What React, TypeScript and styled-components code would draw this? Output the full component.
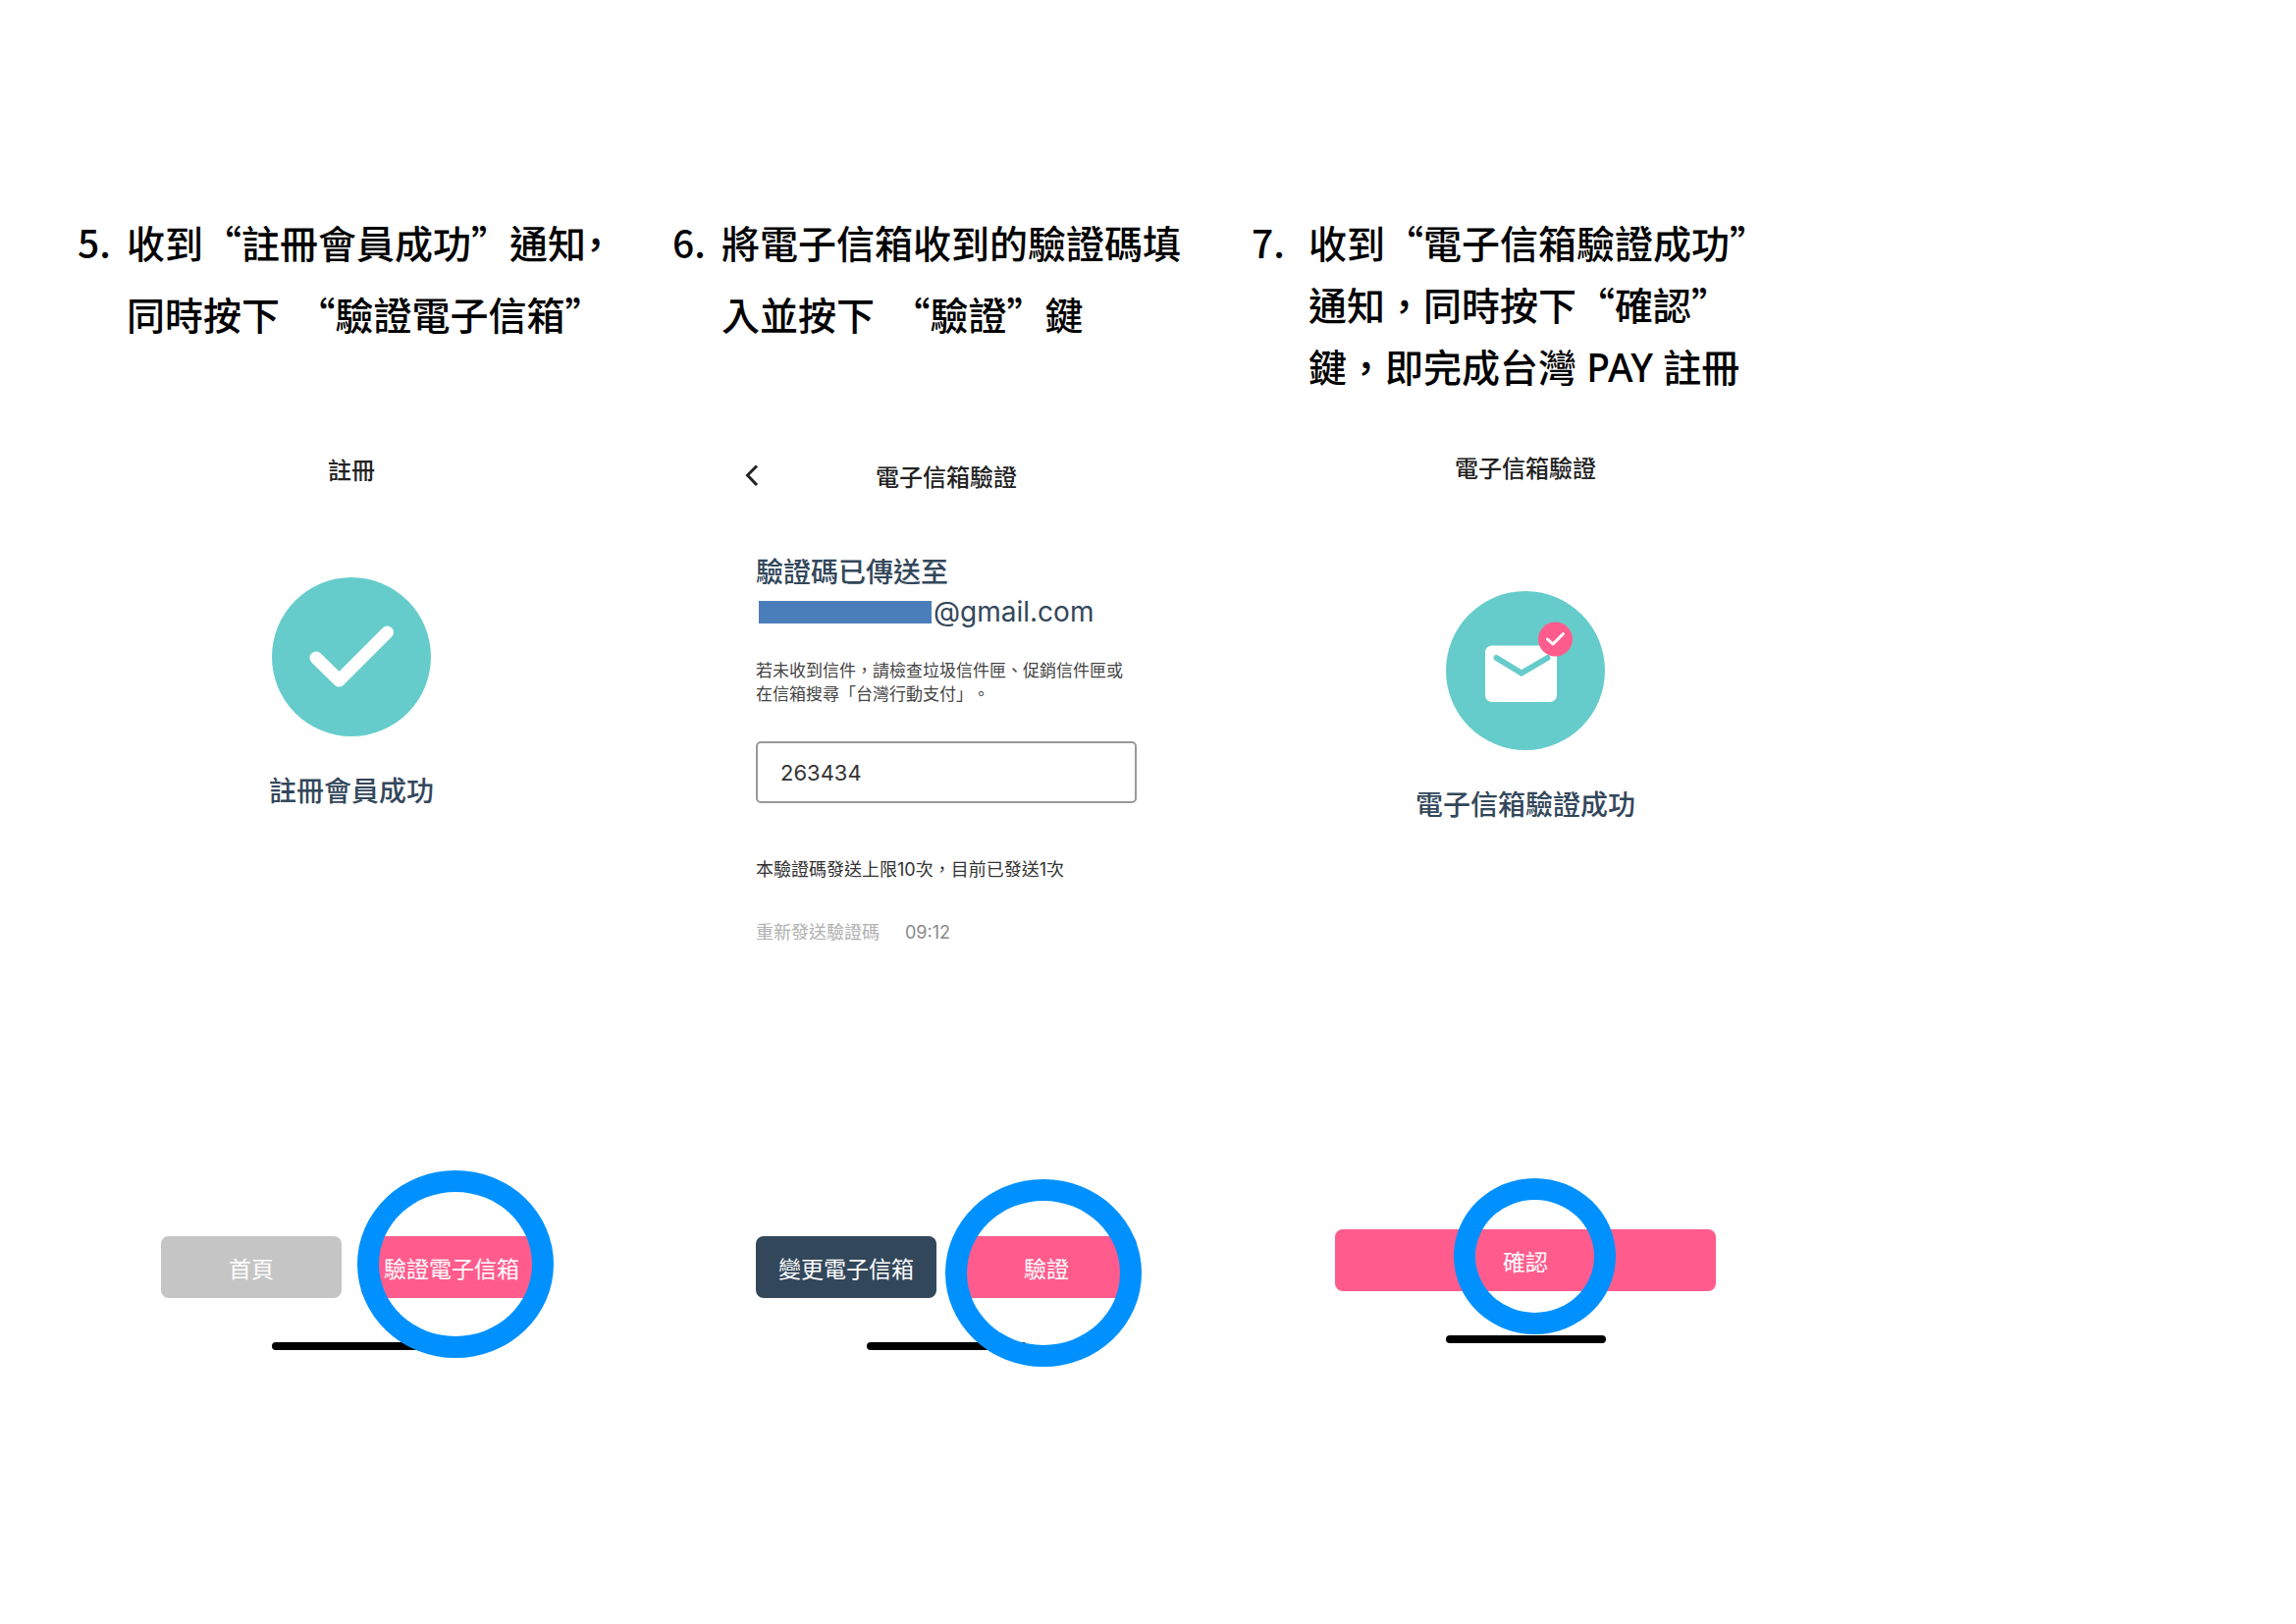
import React from "react";
import styled, { createGlobalStyle } from "styled-components";

const cjk = `"Noto Sans CJK TC", sans-serif`;
const ink = "#33475b";
const pink = "#ff5c8d";
const teal = "#66cccb";

const GlobalStyle = createGlobalStyle`
  * { box-sizing: border-box; }
  body { margin: 0; background: #fff; font-family: ${cjk}; }
`;

const Page = styled.main`
  padding: 210px 0 120px 79px;
`;

const Steps = styled.ol`
  display: grid;
  grid-template-columns: 606fr 590fr 1064fr;
  align-items: start;
  margin: 0;
  padding: 0;
  list-style: none;
`;

const Step = styled.li`
  min-width: 0;
`;

const Caption = styled.div<{ $dense?: boolean }>`
  display: grid;
  grid-template-columns: ${(p) => (p.$dense ? 58 : 50)}px 1fr;
  align-content: start;
  min-height: 242px;
  padding-top: ${(p) => (p.$dense ? 5 : 0)}px;
  color: #000;
  font-size: 39px;
  font-weight: 500;
  line-height: ${(p) => (p.$dense ? 63 : 73)}px;
  white-space: pre;
`;

const CaptionText = styled.h2`
  margin: 0;
  font: inherit;
`;

const HalfWidth = styled.span`
  font-feature-settings: "halt";
`;

const Latin = styled.span`
  font-family: "Noto Sans", sans-serif;
`;

const Screen = styled.section<{ $offset: number; $height: number }>`
  display: flex;
  flex-direction: column;
  width: 100%;
  max-width: 388px;
  min-height: ${(p) => p.$height}px;
  margin: ${(p) => p.$offset}px 0 0 85px;
`;

const TitleBar = styled.header`
  position: relative;
  display: flex;
  justify-content: center;
`;

const Title = styled.h3`
  margin: 0;
  color: #222;
  font-size: 24px;
  font-weight: 500;
  line-height: 36px;
`;

const BackButton = styled.button`
  position: absolute;
  top: 4px;
  left: -12px;
  display: flex;
  padding: 0;
  border: 0;
  background: none;
  color: #222;
`;

const Result = styled.div<{ $gap: number }>`
  display: flex;
  flex-direction: column;
  align-items: center;
  gap: 34px;
  margin-top: ${(p) => p.$gap}px;
`;

const Message = styled.p`
  margin: 0;
  color: ${ink};
  font-size: 28px;
  font-weight: 500;
  line-height: 40px;
`;

const Form = styled.form`
  display: flex;
  flex-direction: column;
  margin-top: 60px;
  font-family: Inter, ${cjk};
`;

const SentTo = styled(Message)`
  font-family: Inter, ${cjk};
`;

const Address = styled.span`
  display: flex;
  align-items: center;
  gap: 2px;
  padding-left: 3px;
  font-weight: 400;
`;

const Mask = styled.span`
  width: 176px;
  height: 23px;
  background: #4a7ebb;
`;

const Hint = styled.label`
  margin-top: 28px;
  color: #444;
  font-size: 17px;
  line-height: 24px;
  text-spacing-trim: space-all;
`;

const CodeInput = styled.input`
  width: 100%;
  height: 63px;
  margin-top: 36px;
  padding: 0 23px;
  border: 2px solid #999;
  border-radius: 5px;
  background: #fff;
  color: #333;
  font-family: Inter, ${cjk};
  font-size: 22px;
`;

const Note = styled.p`
  margin: 56px 0 0;
  color: #333;
  font-size: 18px;
  line-height: 24px;
`;

const ResendRow = styled.div`
  display: flex;
  align-items: center;
  gap: 26px;
  margin-top: 40px;
  color: #8a8a8a;
  font-size: 18px;
  line-height: 24px;
`;

const Resend = styled.button`
  padding: 0;
  border: 0;
  background: none;
  color: #b0b0b0;
  font: inherit;
`;

const Actions = styled.div`
  position: relative;
  display: flex;
  gap: 20px;
  margin-top: auto;
`;

const Button = styled.button<{ $color: string }>`
  flex: 1;
  height: 63px;
  padding: 0;
  border: 0;
  border-radius: 8px;
  background: ${(p) => p.$color};
  color: #fff;
  font-family: ${cjk};
  font-size: 23px;
  font-weight: 400;
  white-space: nowrap;
`;

const Ring = styled.span<{ $x: number; $y: number; $w: number; $h: number }>`
  position: absolute;
  left: ${(p) => p.$x}px;
  top: ${(p) => p.$y}px;
  z-index: 1;
  width: ${(p) => p.$w}px;
  height: ${(p) => p.$h}px;
  border: 22px solid #0091ff;
  border-radius: 50%;
  pointer-events: none;
`;

const HomeBar = styled.div`
  align-self: center;
  width: 163px;
  height: 8px;
  margin-top: 45px;
  border-radius: 4px;
  background: #000;
`;

function CheckBadge() {
  return (
    <svg width="162" height="162" viewBox="0 0 162 162" fill="none" aria-hidden="true">
      <circle cx="81" cy="81" r="81" fill={teal} />
      <path d="M45 82L68.500 105L117.500 56" stroke="#fff" strokeWidth="13" strokeLinecap="round" strokeLinejoin="round" />
    </svg>
  );
}

function MailBadge() {
  return (
    <svg width="162" height="162" viewBox="0 0 162 162" fill="none" aria-hidden="true">
      <circle cx="81" cy="81" r="81" fill={teal} />
      <rect x="40" y="55.500" width="73" height="57.500" rx="7" fill="#fff" />
      <path d="M51.500 68L77 83.500L103.500 68" stroke={teal} strokeWidth="6" strokeLinecap="round" strokeLinejoin="miter" />
      <circle cx="111.500" cy="49" r="17.500" fill={pink} />
      <path d="M103.500 49L109 54L119.500 43.500" stroke="#fff" strokeWidth="3" strokeLinecap="round" strokeLinejoin="round" />
    </svg>
  );
}

export default function App() {
  return (
    <Page lang="zh-Hant">
      <GlobalStyle />
      <Steps>
        <Step>
          <Caption>
            <span>5.</span>
            <CaptionText>
              收到“註冊會員成功”通知<HalfWidth>，</HalfWidth>
              <br />
              {"同時按下  “驗證電子信箱”"}
            </CaptionText>
          </Caption>
          <Screen $offset={8} $height={915}>
            <TitleBar>
              <Title>註冊</Title>
            </TitleBar>
            <Result $gap={92}>
              <CheckBadge />
              <Message>註冊會員成功</Message>
            </Result>
            <Actions>
              <Button type="button" $color="#c5c5c5">首頁</Button>
              <Button type="button" $color={pink}>驗證電子信箱</Button>
              <Ring $x={200} $y={-67} $w={200} $h={191} />
            </Actions>
            <HomeBar />
          </Screen>
        </Step>

        <Step>
          <Caption>
            <span>6.</span>
            <CaptionText>
              將電子信箱收到的驗證碼填
              <br />
              {"入並按下  “驗證”鍵"}
            </CaptionText>
          </Caption>
          <Screen $offset={15} $height={908}>
            <TitleBar>
              <BackButton type="button" aria-label="返回">
                <svg width="16" height="28" viewBox="0 0 16 28" fill="none" aria-hidden="true">
                  <path d="M13 3.500L3.500 13L13 23" stroke="currentColor" strokeWidth="3" />
                </svg>
              </BackButton>
              <Title>電子信箱驗證</Title>
            </TitleBar>
            <Form>
              <SentTo>
                驗證碼已傳送至
                <Address>
                  <Mask />
                  @gmail.com
                </Address>
              </SentTo>
              <Hint htmlFor="code">
                若未收到信件，請檢查垃圾信件匣、促銷信件匣或在信箱搜尋「台灣行動支付」。
              </Hint>
              <CodeInput id="code" inputMode="numeric" defaultValue="263434" />
              <Note>本驗證碼發送上限10次，目前已發送1次</Note>
              <ResendRow>
                <Resend type="button" disabled>重新發送驗證碼</Resend>
                <span>09:12</span>
              </ResendRow>
            </Form>
            <Actions>
              <Button type="button" $color={ink}>變更電子信箱</Button>
              <Button type="button" $color={pink}>驗證</Button>
              <Ring $x={193} $y={-58} $w={200} $h={191} />
            </Actions>
            <HomeBar />
          </Screen>
        </Step>

        <Step>
          <Caption $dense>
            <span>7.</span>
            <CaptionText>
              收到“電子信箱驗證成功”
              <br />
              通知，同時按下“確認”
              <br />
              鍵，即完成台灣<Latin> PAY </Latin>註冊
            </CaptionText>
          </Caption>
          <Screen $offset={6} $height={910}>
            <TitleBar>
              <Title>電子信箱驗證</Title>
            </TitleBar>
            <Result $gap={108}>
              <MailBadge />
              <Message>電子信箱驗證成功</Message>
            </Result>
            <Actions>
              <Button type="button" $color={pink}>確認</Button>
              <Ring $x={121} $y={-52} $w={165} $h={159} />
            </Actions>
            <HomeBar />
          </Screen>
        </Step>
      </Steps>
    </Page>
  );
}
